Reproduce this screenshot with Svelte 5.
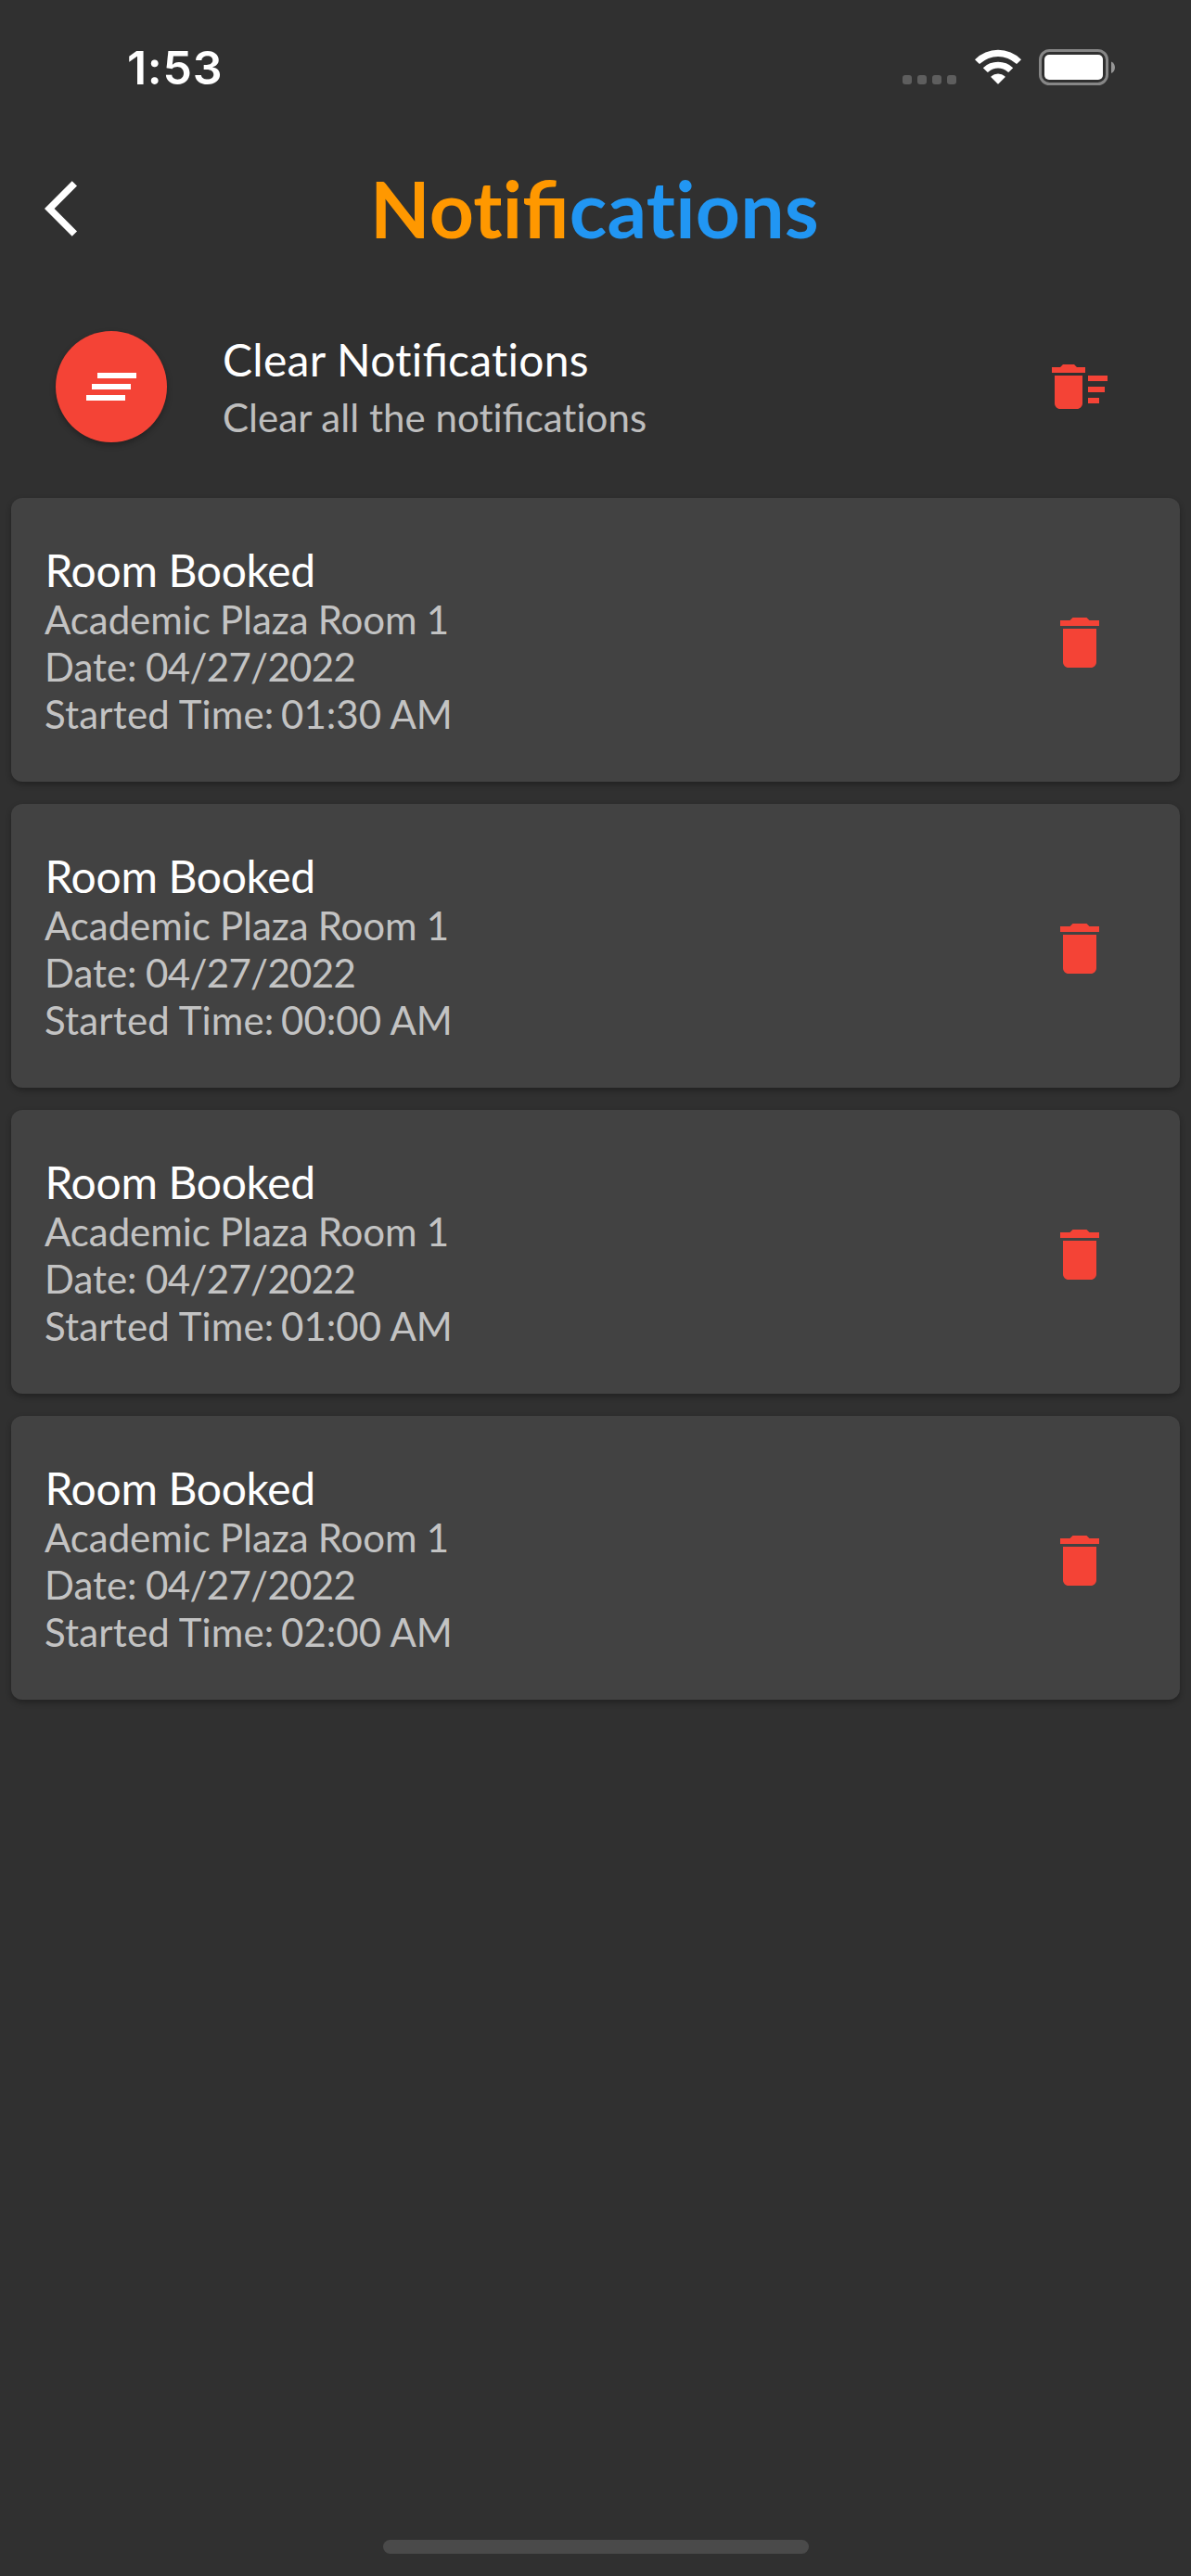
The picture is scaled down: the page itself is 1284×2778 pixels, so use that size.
<script>
  const bookings = [
    { room: 'Academic Plaza Room 1', date: '04/27/2022', time: '01:30 AM' },
    { room: 'Academic Plaza Room 1', date: '04/27/2022', time: '00:00 AM' },
    { room: 'Academic Plaza Room 1', date: '04/27/2022', time: '01:00 AM' },
    { room: 'Academic Plaza Room 1', date: '04/27/2022', time: '02:00 AM' },
  ];
</script>

<div class="screen">
  <div class="status">
    <span class="clock">1:53</span>
    <div class="indicators">
      <div class="signal"><i></i><i></i><i></i><i></i></div>
      <svg class="wifi" width="52" height="38" viewBox="0 0 52 38" fill="#fff">
        <path d="M1 11.2A35.4 35.4 0 0 1 51 11.2L46.6 15.6Q46 16.200 45.300 15.600A28 28 0 0 0 6.700 15.600Q6 16.200 5.400 15.600Z" />
        <path d="M9.800 20.200A23.300 23.300 0 0 1 42.200 20.200L37.800 24.600Q37.100 25.200 36.400 24.600A15.300 15.300 0 0 0 15.600 24.600Q14.900 25.200 14.200 24.600Z" />
        <path d="M18.600 29.300A11 11 0 0 1 33.400 29.300Q33.800 29.900 33.300 30.500L26.600 37.200Q26 37.700 25.400 37.200L18.700 30.500Q18.200 29.900 18.600 29.300Z" />
      </svg>
      <svg class="battery" width="83" height="39" viewBox="0 0 83 39">
        <rect x="1.500" y="1.500" width="72" height="36" rx="10" fill="none" stroke="#868686" stroke-width="3" />
        <rect x="6" y="6" width="63" height="27" rx="5" fill="#fff" />
        <path d="M78 13.500C83.300 15.500 83.300 24 78 26Z" fill="#969696" />
      </svg>
    </div>
  </div>

  <header>
    <svg class="icon" viewBox="0 0 24 24" fill="#fff">
      <path d="M11.67 3.870L9.900 2.100 0 12l9.900 9.900 1.770-1.770L3.540 12z" />
    </svg>
    <h1><span class="orange">Noti<span class="lig">fi</span></span><span class="blue">cations</span></h1>
  </header>

  <section class="clear">
    <div class="avatar">
      <svg class="icon" viewBox="0 0 24 24" fill="#fff">
        <path d="M5 13h14v-2H5v2zm-2 4h14v-2H3v2zM7 7v2h14V7H7z" />
      </svg>
    </div>
    <div class="clear-text">
      <div class="title">Clear Noti<span class="lig">fi</span>cations</div>
      <div class="sub">Clear all the noti<span class="lig">fi</span>cations</div>
    </div>
    <svg class="icon red" viewBox="0 0 24 24">
      <path d="M15 16h4v2h-4zm0-8h7v2h-7zm0 4h6v2h-6zM3 18c0 1.100.9 2 2 2h6c1.100 0 2-.9 2-2V8H3v10zM14 5h-3l-1-1H6L5 5H2v2h12z" />
    </svg>
  </section>

  <main>
    {#each bookings as b}
      <article>
        <div class="info">
          <div class="title">Room Booked</div>
          <div class="sub room">{b.room}</div>
          <div class="sub">Date: <span class="date">{b.date}</span></div>
          <div class="sub"><span class="label">Started Time:</span> <span class="time">{b.time}</span></div>
        </div>
        <svg class="icon red" viewBox="0 0 24 24">
          <path d="M6 19c0 1.100.9 2 2 2h8c1.100 0 2-.9 2-2V7H6v12zM19 4h-3.500l-1-1h-5l-1 1H5v2h14V4z" />
        </svg>
      </article>
    {/each}
  </main>

  <div class="home"></div>
</div>

<style>
  :global(body) {
    background: #303030;
  }
  .screen {
    box-sizing: border-box;
    width: 1284px;
    height: 2778px;
    display: flex;
    flex-direction: column;
    background: #303030;
    color: #fff;
    font-family: Lato, sans-serif;
    font-variant-ligatures: none;
    overflow: hidden;
  }
  .lig {
    font-variant-ligatures: common-ligatures;
    letter-spacing: 0;
  }
  svg {
    display: block;
    flex: none;
  }
  .icon {
    width: 72px;
    height: 72px;
  }
  .red {
    fill: #f44336;
  }
  .status {
    box-sizing: border-box;
    height: 141px;
    display: flex;
    justify-content: space-between;
    align-items: flex-start;
    padding: 43px 81px 0 137px;
  }
  .clock {
    font: 600 50px/60px Inter, sans-serif;
    letter-spacing: 0.7px;
  }
  .indicators {
    display: flex;
    align-items: flex-end;
    height: 49px;
  }
  .signal {
    display: flex;
    gap: 6px;
    margin: 0 20px 1px 0;
  }
  .signal i {
    width: 10px;
    height: 10px;
    border-radius: 3px;
    background: #5e5e5e;
  }
  .wifi {
    margin: 0 18px 1px -1px;
  }
  header {
    height: 168px;
    display: grid;
    grid-template-columns: 72px 1fr 72px;
    align-items: center;
    padding: 0 48px;
  }
  h1 {
    margin: -1px 2px 0 0;
    text-align: center;
    font-size: 84px;
    line-height: 101px;
    font-weight: 700;
    letter-spacing: 0.2px;
  }
  .orange {
    color: #ff9800;
  }
  .blue {
    color: #2196f3;
  }
  .clear {
    box-sizing: border-box;
    height: 216px;
    display: flex;
    align-items: center;
    padding: 0 84px 0 60px;
  }
  .avatar {
    width: 120px;
    height: 120px;
    border-radius: 50%;
    background: #f44336;
    display: flex;
    align-items: center;
    justify-content: center;
    box-shadow: 0 3px 6px rgba(0, 0, 0, 0.3);
  }
  .clear-text {
    flex: 1;
    margin-left: 60px;
  }
  .title {
    font-size: 48px;
    line-height: 57px;
  }
  .clear-text .title {
    letter-spacing: 0.27px;
  }
  .info .title {
    padding-left: 0.4px;
    letter-spacing: -0.3px;
    word-spacing: -0.2px;
  }
  .sub {
    font-size: 42px;
    line-height: 51px;
    color: rgba(255, 255, 255, 0.7);
  }
  .clear-text .sub {
    margin: 9px 0 -1px;
    letter-spacing: 0.03px;
  }
  .room {
    letter-spacing: -0.05px;
    word-spacing: -0.5px;
  }
  .date {
    margin-left: -1.3px;
    letter-spacing: -0.68px;
  }
  .label {
    letter-spacing: 0.18px;
  }
  .time {
    margin-left: -3.2px;
  }
  main {
    flex: 1;
    display: flex;
    flex-direction: column;
    gap: 24px;
    padding: 12px 12px 0;
  }
  article {
    box-sizing: border-box;
    height: 306px;
    display: flex;
    justify-content: space-between;
    padding: 49px 72px 0 36px;
    border-radius: 12px;
    background: #424242;
    box-shadow: 0 3px 6px rgba(0, 0, 0, 0.3);
  }
  article .icon {
    margin-top: 71px;
  }
  .home {
    width: 459px;
    height: 15px;
    border-radius: 8px;
    background: #4a4a4a;
    margin: 0 auto 24px;
  }
</style>
